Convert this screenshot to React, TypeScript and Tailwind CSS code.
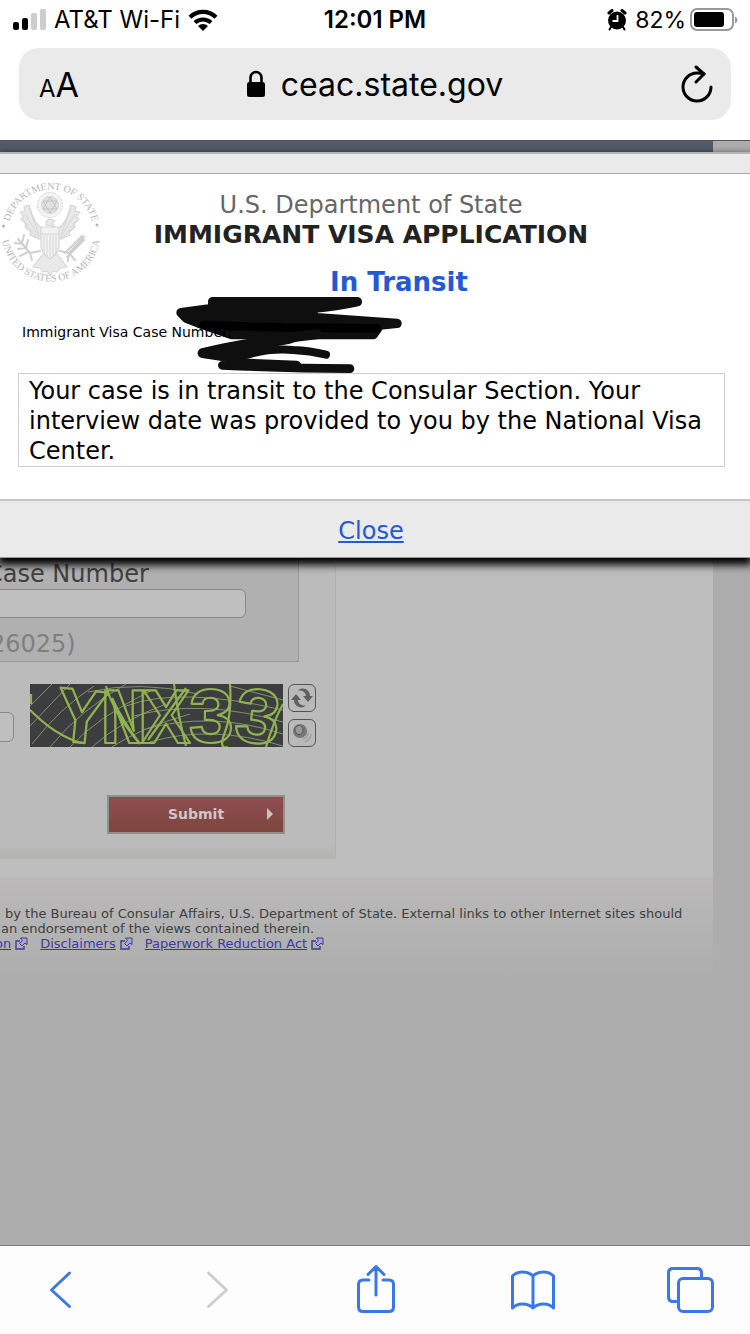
import type { ReactNode } from "react";

const toolbarStroke = {
  fill: "none",
  stroke: "currentColor",
  strokeWidth: 3,
  strokeLinecap: "round" as const,
  strokeLinejoin: "round" as const,
};

function StatusBar() {
  return (
    <div className="grid h-10 grid-cols-3 items-center px-3 font-['Inter',sans-serif] text-2xl text-black">
      <div className="flex items-center gap-2">
        <svg width="34" height="22" viewBox="0 0 34 22" aria-hidden="true">
          <rect x="1" y="13" width="6" height="8" rx="2" />
          <rect x="10" y="9" width="6" height="12" rx="2" />
          <rect x="19" y="4" width="6" height="17" rx="2" fill="#cdcdcd" />
          <rect x="28" y="0" width="6" height="21" rx="2" fill="#cdcdcd" />
        </svg>
        <span className="whitespace-nowrap">AT&amp;T Wi-Fi</span>
        <svg width="30" height="22" viewBox="0 0 30 22" aria-hidden="true">
          <path d="M2 8.2a18.6 18.6 0 0 1 26 0" fill="none" stroke="#000" strokeWidth="4.2" />
          <path d="M7 13.6a11.6 11.6 0 0 1 16 0" fill="none" stroke="#000" strokeWidth="4" />
          <path d="M10 17a7.4 7.4 0 0 1 10 0l-5 5z" />
        </svg>
      </div>
      <div className="text-center font-semibold">12:01 PM</div>
      <div className="flex items-center justify-end">
        <svg width="20" height="22" viewBox="0 0 20 22" className="mr-2" aria-hidden="true">
          <circle cx="10" cy="11.5" r="9" />
          <path d="M2 4 5 1.500M18 4 15 1.500" stroke="#000" strokeWidth="3" strokeLinecap="round" />
          <path d="M4 18 2.500 20.500M16 18 17.500 20.500" stroke="#000" strokeWidth="2" strokeLinecap="round" />
          <path d="M10.500 6V12H5.500" fill="none" stroke="#fff" strokeWidth="1.800" />
        </svg>
        <span className="mr-1 text-[23px]">82%</span>
        <svg width="48" height="24" viewBox="0 0 48 24" aria-hidden="true">
          <rect x="1" y="1" width="42" height="21" rx="6" fill="none" stroke="#999" strokeWidth="2" />
          <rect x="4" y="4" width="30" height="15" rx="3" />
          <path d="M45 8.500q2.500 1 2.500 3.500t-2.500 3.500z" fill="#999" />
        </svg>
      </div>
    </div>
  );
}

function AddressBar() {
  return (
    <div className="px-[19px] pt-2 pb-5 font-['Inter',sans-serif]">
      <div className="grid h-[72px] grid-cols-[1fr_auto_1fr] items-center rounded-[20px] bg-[#eaeaea] px-4 text-black">
        <button type="button" aria-label="Text size" className="flex items-baseline justify-self-start pl-1">
          <span className="text-2xl">A</span>
          <span className="text-[34px]">A</span>
        </button>
        <div className="flex items-center gap-3.5">
          <svg width="20" height="28" viewBox="0 0 20 28" aria-hidden="true">
            <rect x="0" y="12" width="18" height="15" rx="2.500" />
            <path d="M3.500 13V7.500a5.500 5.500 0 0 1 11 0V13" fill="none" stroke="#000" strokeWidth="2.600" />
          </svg>
          <span className="pt-0.5 text-[32px]">ceac.state.gov</span>
        </div>
        <button type="button" aria-label="Reload" className="justify-self-end">
          <svg width="36" height="40" viewBox="0 0 36 40" {...toolbarStroke}>
            <path d="M17 3 25 10 17 18" />
            <path d="M25 10Q22 9 18 9A14 14 0 1 0 32 23" />
          </svg>
        </button>
      </div>
    </div>
  );
}

function Seal() {
  return (
    <svg
      width="102"
      height="106"
      viewBox="0 0 102 106"
      className="col-start-1 row-start-1 text-[#d6d6d6]"
      role="img"
      aria-label="Department of State seal"
    >
      <defs>
        <path id="seal-top" d="M8.500 52A42.500 42.500 0 0 1 93.500 52" />
        <path id="seal-bottom" d="M1.500 52A49.500 49.500 0 0 0 100.500 52" />
      </defs>
      <g fill="#b8b8b8" fontFamily="'Liberation Serif', serif" fontSize="10">
        <text textAnchor="middle">
          <textPath href="#seal-top" startOffset="50%">DEPARTMENT OF STATE</textPath>
        </text>
        <text textAnchor="middle">
          <textPath href="#seal-bottom" startOffset="50%">UNITED STATES OF AMERICA</textPath>
        </text>
        <circle cx="3.500" cy="46" r="1.500" />
        <circle cx="97" cy="45" r="1.500" />
      </g>
      {/* glory above the eagle */}
      <circle cx="50" cy="25" r="12.500" fill="#f3f3f3" stroke="currentColor" strokeDasharray="2 1" />
      <circle cx="50" cy="25" r="8.500" fill="#e2e2e2" stroke="currentColor" />
      <path d="m50 17 7 12H43zM50 33l-7-12h14z" fill="none" stroke="#c4c4c4" />
      {/* wings, tail and shield */}
      <g fill="#e9e9e9" stroke="currentColor" strokeWidth="1.200" strokeLinejoin="round">
        <path d="M42 48C36 46 32 36 29 25l-5 2 1 4-5 1 4 5-3 2 5 5-1 3 6 5-1 3 7 3 5 1z" />
        <path d="M58 48c6-2 10-12 13-23l5 2-1 4 5 1-4 5 3 2-5 5 1 3-6 5 1 3-7 3-5 1z" />
        <path d="M43 74l-10 13 7 1 3 4 4-1 3 4 3-4 4 1 3-4 7-1-10-13z" />
        <path d="M46 45q0-6 5-6l4 2-3 2 3 4z" />
        <path d="M41 47h18v20q-2 8-9 12-7-4-9-12z" fill="#f2f2f2" />
      </g>
      <path d="M41 54h18M44 55v18M47 55v21M50 55v22M53 55v21M56 55v18" stroke="currentColor" />
      <path
        d="M29 28l10 27M25 34l14 23M23 40l16 20M71 28 61 55M75 34 61 57M77 40 61 60"
        stroke="currentColor"
        fill="none"
      />
      {/* olive branch and arrows */}
      <g fill="none" stroke="#cfcfcf" strokeWidth="2" strokeLinecap="round">
        <path d="M40 71l-10 2-12-14M30 73l2 7M26 68l-8 1M23 64l-8-1M22 63l2-8M26 68l2-8M28 72l-8 4" />
        <path d="M60 71l9 2 15-16M67 77l17-17M65 73l17-17M69 73l-1 8M70 74l5 6" />
      </g>
    </svg>
  );
}

function Scribble() {
  return (
    <svg
      width="260"
      height="100"
      viewBox="0 0 780 300"
      className="absolute -top-[35px] left-[150px] -z-10"
      fill="none"
      stroke="#0f0f0f"
      strokeLinecap="round"
      strokeLinejoin="round"
      aria-hidden="true"
    >
      <path d="M188 50H622Q560 64 490 70L490 97 741 115 690 120 670 149H245L145 114 110 100 93 83 188 70z" fill="#0f0f0f" strokeWidth="28" />
      <path d="M160 120 400 128 680 130" stroke="#000" strokeWidth="26" />
      <path d="M500 148Q300 168 158 204L262 222Q300 196 420 176z" fill="#0f0f0f" stroke="none" />
      <path d="M500 148Q300 170 158 204L262 220" strokeWidth="30" />
      <path d="M262 220Q340 188 430 195 480 197 528 209" strokeWidth="24" />
      <path d="M217 241Q420 250 600 251M240 232 440 240" strokeWidth="26" />
    </svg>
  );
}

function StatusDialog() {
  return (
    <section
      role="dialog"
      aria-label="Visa status"
      className="relative z-10 border-t-2 border-[#b5b5b5] bg-white shadow-[0_5px_8px_2px_#000]"
    >
      <div className="h-5 border-b border-[#a8a8a8] bg-[#eaeaea]" />
      <div className="pt-1.5 pb-8">
        <div className="grid">
          <Seal />
          <div className="col-start-1 row-start-1 pt-2.5 pr-2 text-center">
            <p className="text-2xl leading-[30px] text-[#666]">U.S. Department of State</p>
            <h1 className="text-[25px] leading-[30px] font-bold text-[#222]">IMMIGRANT VISA APPLICATION</h1>
            <h2 className="mt-4 pl-14 text-[26px] leading-8 font-bold text-[#2459d3]">In Transit</h2>
          </div>
        </div>
        <p className="relative isolate mt-[22px] pl-[22px] text-sm leading-6 text-black">
          Immigrant Visa Case Number:
          <Scribble />
        </p>
        <p className="mt-[29px] mr-[25px] ml-[18px] border border-[#cfcfcf] px-2.5 pt-0.5 text-2xl leading-[30px] text-black">
          Your case is in transit to the Consular Section. Your interview date was provided to you by the National Visa
          Center.
        </p>
      </div>
      <div className="flex h-[59px] items-center justify-center border-t-2 border-b border-t-[#c4c4c4] border-b-[#999] bg-[#eaeaea] pt-1 pr-2">
        <a href="#close" className="text-2xl leading-8 text-[#2459d3] underline decoration-2 underline-offset-2">
          Close
        </a>
      </div>
    </section>
  );
}

function Captcha() {
  return (
    <svg
      width="253"
      height="63"
      viewBox="0 0 253 63"
      className="bg-[#3d3d3f]"
      role="img"
      aria-label="Captcha"
      fill="none"
      stroke="#8fb350"
    >
      <g strokeWidth="1" stroke="#7c936c">
        <path d="M0 22 22 0M0 42 40 0M2 60Q30 24 64 2M20 63Q50 26 96 0M40 63Q66 34 122 6M62 63Q92 36 136 20M82 63Q110 44 160 30" />
        <path d="M58 8Q110-4 168 10M96 22Q150 2 253 26M104 32Q170 14 253 38M112 46Q180 26 253 50M120 58Q180 40 253 62M200 2 253 16" />
      </g>
      <text
        x="25 70 112 157 201"
        y="56 59 59 58 56"
        rotate="6 0 0 0 6"
        fontFamily="'Liberation Mono', monospace"
        fontWeight="bold"
        fontSize="80"
        strokeWidth="2.200"
        strokeLinejoin="round"
      >
        YNX33
      </text>
      <g strokeWidth="2.200">
        <path d="M0 26Q18 44 34 52T52 58M76 2Q84 30 110 60M82 14Q92 36 110 60" />
        <path d="M144 0Q148 32 156 62M200 0Q202 30 195 48T198 63M253 20Q244 36 236 63M118 56 156 4M1 10v10" />
      </g>
    </svg>
  );
}

function IconButton({ label, children }: { label: string; children: ReactNode }) {
  return (
    <button
      type="button"
      aria-label={label}
      className="flex size-7 items-center justify-center rounded-md border border-[#555] bg-[#b9b9b9] text-[#606060]"
    >
      {children}
    </button>
  );
}

function LookupForm() {
  return (
    <form className="h-[301px] w-[336px] border-r border-[#b2b2b2] bg-gradient-to-b from-[#bbb] from-95% to-[#b2b2b0]">
      <div className="h-[104px] w-[299px] border-r border-b border-[#989898] bg-[#b0b0b0]">
        <label htmlFor="case-number" className="-ml-3.5 block pt-px text-2xl leading-[30px] text-[#404040]">
          Case Number
        </label>
        <input
          id="case-number"
          className="-ml-2 block h-[29px] w-[254px] rounded-md border border-[#888] bg-[#bfbfbf] px-2 text-base"
        />
        <p className="mt-2.5 -ml-2.5 text-2xl leading-8 text-[#808080]">26025)</p>
      </div>
      <div className="mt-[22px] flex">
        <input
          aria-label="Enter the code"
          className="mt-7 -ml-2 h-[30px] w-[22px] rounded-md border border-[#888] bg-[#bfbfbf]"
        />
        <div className="ml-4">
          <Captcha />
        </div>
        <div className="ml-[5px] flex flex-col justify-between">
          <IconButton label="Refresh code">
            <svg width="24" height="22" viewBox="0 0 24 22" fill="currentColor">
              <path d="M8 3.500C13-1 20 3 20 9h3l-5 6-5-6h3c0-4-4-6-8-5.500z" />
              <path d="M16 18.500C11 23 4 19 4 13H1l5-6 5 6H8c0 4 4 6 8 5.500z" />
            </svg>
          </IconButton>
          <IconButton label="Play code">
            <svg width="22" height="22" viewBox="0 0 22 22" fill="none">
              <circle cx="9" cy="9" r="7" fill="#777" />
              <ellipse cx="8" cy="8" rx="4" ry="4.500" fill="#999" stroke="#555" />
              <path d="M12 17q5-2 5-6M14 20q6-3 6-8" stroke="#a0a0a0" strokeWidth="1.500" />
            </svg>
          </IconButton>
        </div>
      </div>
      <button
        type="submit"
        className="mt-12 ml-[107px] flex h-[39px] w-[178px] items-center border-2 border-[#8f918c] bg-gradient-to-b from-[#8f4d50] to-[#7d463e] pb-0.5 text-sm font-bold text-[#cfc6c6]"
      >
        <span className="flex-1 text-center">Submit</span>
        <svg width="6" height="12" viewBox="0 0 6 12" className="-ml-4 mr-2.5" fill="#c9c3c0">
          <path d="M0 0 6 6 0 12z" />
        </svg>
      </button>
    </form>
  );
}

function ExternalLink({ children }: { children: ReactNode }) {
  return (
    <span className="flex items-center gap-1">
      <a href="#external" className="underline">
        {children}
      </a>
      <svg width="13" height="13" viewBox="0 0 13 13" fill="none" stroke="currentColor" strokeWidth="1.400" aria-hidden="true">
        <path d="M5 4H1V12h8V9" />
        <path d="M5.500 1H12v6.500L10 6 7 9 4.500 6.500l3-3z" fill="#aaa6c8" strokeWidth="1" />
      </svg>
    </span>
  );
}

function PageFooter() {
  return (
    <footer className="mt-[19px] h-[103px] overflow-hidden bg-gradient-to-b from-[#bbb9b9] to-[#adadad] pt-7 text-[13px] leading-[15px] whitespace-nowrap text-[#404040]">
      <p className="pl-[5px]">
        by the Bureau of Consular Affairs, U.S. Department of State. External links to other Internet sites should
      </p>
      <p className="pl-px">an endorsement of the views contained therein.</p>
      <div className="-ml-[5px] flex gap-3 text-[#403aa0]">
        <ExternalLink>on</ExternalLink>
        <ExternalLink>Disclaimers</ExternalLink>
        <ExternalLink>Paperwork Reduction Act</ExternalLink>
      </div>
    </footer>
  );
}

function Toolbar() {
  const button = "flex size-12 items-center justify-center";
  return (
    <nav className="flex h-[89px] items-center justify-between border-t border-[#777] bg-[#fdfdfd] pr-9 pl-[37px] text-[#3b78e7]">
      <button type="button" aria-label="Back" className={button}>
        <svg width="48" height="48" viewBox="0 0 48 48" {...toolbarStroke}>
          <path d="M32.500 7 14.500 24 32.500 40.500" />
        </svg>
      </button>
      <button type="button" aria-label="Forward" className={`${button} text-[#cecece]`}>
        <svg width="48" height="48" viewBox="0 0 48 48" {...toolbarStroke}>
          <path d="M14.500 7 32.500 24 14.500 40.500" />
        </svg>
      </button>
      <button type="button" aria-label="Share" className={button}>
        <svg width="48" height="48" viewBox="0 0 48 48" {...toolbarStroke} className="overflow-visible">
          <path d="M17 14H11q-4.500 0-4.500 4.500V41q0 4.500 4.500 4.500H37q4.500 0 4.500-4.500V18.500Q41.500 14 37 14H31" />
          <path d="M24 29V1M16 8.500 24 .5 32 8.500" />
        </svg>
      </button>
      <button type="button" aria-label="Bookmarks" className={button}>
        <svg width="48" height="48" viewBox="0 0 48 48" {...toolbarStroke}>
          <path d="M3.500 42V10C8 4.500 19 4.500 24 10 29 4.500 40 4.500 44.500 10V42C40 36.500 29 36.500 24 42 19 36.500 8 36.500 3.500 42zM24 10V42" />
        </svg>
      </button>
      <button type="button" aria-label="Tabs" className={button}>
        <svg width="48" height="48" viewBox="0 0 48 48" {...toolbarStroke}>
          <path d="M12 35.500H7q-4.500 0-4.500-4.500V7q0-4.500 4.500-4.500H31q4.500 0 4.500 4.500v4" />
          <rect x="12.500" y="12.500" width="34" height="33" rx="4.500" />
        </svg>
      </button>
    </nav>
  );
}

export default function App() {
  return (
    <div className="flex min-h-screen flex-col overflow-x-hidden bg-white font-['DejaVu_Sans',sans-serif]">
      <header>
        <StatusBar />
        <AddressBar />
      </header>
      <main className="flex-1 bg-[#adadad]">
        <div className="border-t border-[#555]">
          <div className="mr-[37px] h-[11px] bg-[#525a69]" />
        </div>
        <StatusDialog />
        <div className="mr-[37px] bg-[#bebebe]">
          <LookupForm />
          <PageFooter />
        </div>
      </main>
      <Toolbar />
    </div>
  );
}
